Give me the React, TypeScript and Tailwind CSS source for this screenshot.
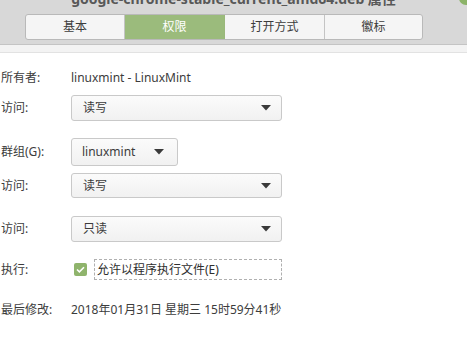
import React from "react";

const font = { fontFamily: '"Noto Sans", "Noto Sans CJK SC", sans-serif' };

function Arrow() {
  return (
    <svg width="10" height="6" viewBox="0 0 10 6" className="shrink-0">
      <path d="M0 0 L10 0 L5 5.5 Z" fill="#3a3a3a" />
    </svg>
  );
}

function Dropdown({ text, h }: { text: string; h: string }) {
  return (
    <div
      className={`flex w-[211px] ${h} items-center justify-between rounded-[3px] border border-[#c9c9c9] bg-gradient-to-b from-[#fbfbfb] to-[#f1f1f1] pl-[11px] pr-[10px] text-[12px] text-[#3c3c3c]`}
    >
      <span>{text}</span>
      <Arrow />
    </div>
  );
}

export default function App() {
  return (
    <div
      className="flex h-[347px] w-[467px] flex-col overflow-hidden bg-white text-[12px] text-[#3c3c3c]"
      style={font}
    >
      <div className="relative h-[45px] shrink-0 border-b border-[#c4c4c4] bg-[#d8d8d8]">
        <div className="mt-[-11px] h-[20px] text-center text-[14px] font-bold leading-[20px] text-[#585858]">
          google-chrome-stable_current_amd64.deb 属性
        </div>
        <div className="absolute right-[-6px] top-[-9px] h-[14px] w-[14px] rounded-full bg-[#8cb368]" />
        <div className="ml-[25px] mt-[5px] flex h-[26px] w-[398px] overflow-hidden rounded-[3px] border border-[#b9b9b9] bg-[#f5f5f5] text-[12px]">
          <div className="flex w-[99px] items-center justify-center border-r border-[#c4c4c4] text-[#3c3c3c]">基本</div>
          <div className="flex w-[100px] items-center justify-center border-r border-[#9ab87b] bg-[#9bbb7c] text-white">权限</div>
          <div className="flex w-[100px] items-center justify-center border-r border-[#c4c4c4] text-[#3c3c3c]">打开方式</div>
          <div className="flex flex-1 items-center justify-center text-[#3c3c3c]">徽标</div>
        </div>
      </div>
      <div className="h-[8px] shrink-0 border-b border-[#e2e2e2] bg-[#f3f3f3]" />

      <div className="flex flex-col pl-[1px]">
        <div className="mt-[15px] flex h-[20px] items-center">
          <span className="w-[70px]">所有者:</span>
          <span>linuxmint - LinuxMint</span>
        </div>
        <div className="mt-[7px] flex items-center">
          <span className="w-[70px]">访问:</span>
          <Dropdown text="读写" h="h-[26px]" />
        </div>
        <div className="mt-[17px] flex items-center">
          <span className="w-[70px]">群组(G):</span>
          <div className="flex h-[28px] w-[107px] items-center justify-between rounded-[3px] border border-[#c9c9c9] bg-gradient-to-b from-[#fbfbfb] to-[#f1f1f1] pl-[10px] pr-[13px]">
            <span>linuxmint</span>
            <Arrow />
          </div>
        </div>
        <div className="mt-[7px] flex items-center">
          <span className="w-[70px]">访问:</span>
          <Dropdown text="读写" h="h-[25px]" />
        </div>
        <div className="mt-[18px] flex items-center">
          <span className="w-[70px]">访问:</span>
          <Dropdown text="只读" h="h-[26px]" />
        </div>
        <div className="mt-[17px] flex h-[21px] items-center">
          <span className="w-[73px]">执行:</span>
          <div className="flex h-[13px] w-[13px] items-center justify-center rounded-[2px] bg-[#8fb46c]">
            <svg width="9" height="7" viewBox="0 0 9 7">
              <path d="M1 3.5 L3.4 5.8 L8 1.2" fill="none" stroke="white" strokeWidth="1.6" />
            </svg>
          </div>
          <div className="ml-[7px] flex h-[21px] w-[188px] items-center border border-dashed border-[#b0b0b0] pl-[2px] text-[#2e2e2e]">
            允许以程序执行文件(E)
          </div>
        </div>
        <div className="mt-[20px] flex h-[20px] items-center">
          <span className="w-[70px]">最后修改:</span>
          <span>2018年01月31日 星期三 15时59分41秒</span>
        </div>
      </div>
    </div>
  );
}
